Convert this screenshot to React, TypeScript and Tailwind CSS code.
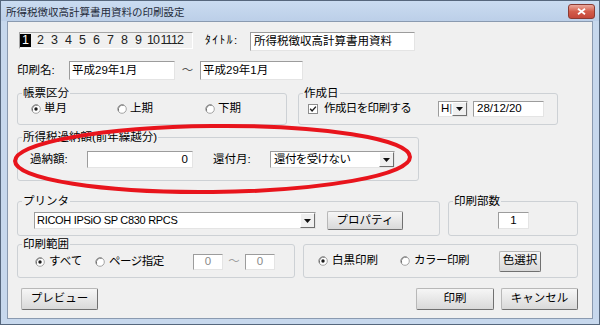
import { ReactNode } from 'react'

const FONT = "font-['Liberation_Sans','Noto_Sans_CJK_JP',sans-serif]"
const SUNKEN = 'border border-t-[#9c9c9c] border-l-[#9c9c9c] border-r-[#e4e4e4] border-b-[#e4e4e4]'

function Radio({ on }: { on?: boolean }) {
  return (
    <svg width="10" height="10" viewBox="0 0 10 10" className="shrink-0">
      <circle cx="5" cy="5" r="4.3" fill="#fff" stroke="#a3a3a3" strokeWidth="1" />
      <path d="M1.6 6.8 A4.3 4.3 0 0 1 6.8 1.2" fill="none" stroke="#6e6e6e" strokeWidth="1" />
      {on && <circle cx="5" cy="5" r="1.7" fill="#1b1b1b" />}
    </svg>
  )
}

function Check() {
  return (
    <svg width="10" height="10" viewBox="0 0 10 10" className="shrink-0">
      <rect x="0.5" y="0.5" width="9" height="9" fill="#fff" stroke="#8d8d8d" />
      <path d="M2.2 4.8 L4.1 6.9 L7.9 2.6" fill="none" stroke="#1b1b1b" strokeWidth="1.4" />
    </svg>
  )
}

function Arrow() {
  return (
    <div className="w-[15px] h-full shrink-0 flex items-center justify-center bg-[#f0f0f0] border-l border-t border-l-[#ffffff] border-t-[#ffffff] border-r border-b border-r-[#6f6f6f] border-b-[#6f6f6f]">
      <svg width="7" height="4" viewBox="0 0 7 4">
        <path d="M0 0 L7 0 L3.5 4 Z" fill="#111" />
      </svg>
    </div>
  )
}

function Group({ label, className, children }: { label: string; className: string; children: ReactNode }) {
  return (
    <fieldset className={`border border-[#cdd1d5] rounded-[3px] ${className}`}>
      <legend className="ml-[4px] px-[1px] text-[11.5px] leading-[14px]">{label}</legend>
      {children}
    </fieldset>
  )
}

function Btn({ className, children }: { className: string; children: ReactNode }) {
  return (
    <div
      className={`flex items-center justify-center rounded-[2px] border border-[#b8b8b8] border-r-[#707070] border-b-[#707070] bg-linear-to-b from-[#f6f6f6] to-[#d9d9d9] text-[11.5px] ${className}`}
    >
      {children}
    </div>
  )
}

const tabs = ['2', '3', '4', '5', '6', '7', '8', '9']

export default function App() {
  return (
    <div className={`relative w-[600px] h-[325px] overflow-hidden bg-[#c7d8ed] border border-[#56677d] text-black ${FONT}`}>
      {/* title bar */}
      <div className="h-[20px] flex items-start justify-between pl-[5px] pr-[4px] bg-linear-to-b from-[#cadcf1] to-[#bccfe8]">
        <span className="mt-[5px] text-[10.5px] leading-[12px] text-[#1f2b3a]">所得税徴収高計算書用資料の印刷設定</span>
        <div className="mt-[3px] w-[27px] h-[15px] rounded-[3px] border border-[#8b3b33] bg-linear-to-b from-[#eaa99e] via-[#d35d4b] to-[#c4473a] flex items-center justify-center">
          <svg width="9" height="7" viewBox="0 0 9 7">
            <path d="M1 0.8 L8 6.2 M8 0.8 L1 6.2" stroke="#fff" strokeWidth="1.8" />
          </svg>
        </div>
      </div>

      {/* client area */}
      <div className="ml-[6px] w-[586px] h-[298px] border border-[#8a9ab0] bg-[#f0f0f0] pl-[9px] pr-[14px] flex flex-col text-[11.5px]">
        {/* row 1 */}
        <div className="mt-[10px] h-[18px] flex items-start">
          <div className="ml-[2px] w-[174px] h-[17px] flex items-center border border-t-[#a6a6a6] border-l-[#a6a6a6] border-r-white border-b-white text-[12.5px] leading-none text-[#222]">
            <span className="w-[11px] h-[13px] bg-black text-white flex items-center justify-center">1</span>
            <span className="w-[2.5px]" />
            {tabs.map((t) => (
              <span key={t} className="w-[14px] text-center">
                {t}
              </span>
            ))}
            <span className="w-[15px] text-center tracking-[-1px]">10</span>
            <span className="w-[10px] text-center tracking-[-1px]">11</span>
            <span className="w-[13px] text-center tracking-[-1px]">12</span>
          </div>
          <span className="ml-[12px] w-[45px] h-[18px] flex items-center tracking-[1.5px]">ﾀｲﾄﾙ:</span>
          <div className={`w-[165px] h-[19px] bg-white flex items-center px-[3px] ${SUNKEN}`}>所得税徴収高計算書用資料</div>
        </div>

        {/* row 2 */}
        <div className="mt-[11px] h-[19px] flex items-center">
          <span className="w-[52px]">印刷名:</span>
          <div className={`w-[106px] h-[19px] bg-white flex items-center px-[2px] ${SUNKEN}`}>平成29年1月</div>
          <span className="w-[25px] text-center text-[#555]">～</span>
          <div className={`w-[103px] h-[19px] bg-white flex items-center px-[2px] ${SUNKEN}`}>平成29年1月</div>
        </div>

        {/* row 3 */}
        <div className="mt-[6px] flex gap-[11px]">
          <Group label="帳票区分" className="w-[270px] h-[39px]">
            <div className="h-[17px] flex items-center pl-[13px]">
              <div className="w-[86px] flex items-center gap-[3px]">
                <Radio on />
                <span>単月</span>
              </div>
              <div className="w-[88px] flex items-center gap-[3px]">
                <Radio />
                <span>上期</span>
              </div>
              <div className="flex items-center gap-[3px]">
                <Radio />
                <span>下期</span>
              </div>
            </div>
          </Group>
          <Group label="作成日" className="w-[260px] h-[39px]">
            <div className="h-[17px] flex items-center pl-[9px]">
              <div className="w-[104px] flex items-center gap-[6px]">
                <Check />
                <span className="whitespace-nowrap tracking-[-0.6px]">作成日を印刷する</span>
              </div>
              <div className={`ml-[26px] w-[30px] h-[16px] bg-white flex items-center ${SUNKEN}`}>
                <span className="flex-1 pl-[2px] leading-none">H<span className="text-[#777]">|</span></span>
                <Arrow />
              </div>
              <div className={`ml-[5px] w-[71px] h-[16px] bg-white flex items-center px-[3px] ${SUNKEN}`}>28/12/20</div>
            </div>
          </Group>
        </div>

        {/* row 4 */}
        <div className="mt-[5px] flex">
          <Group label="所得税過納額(前年繰越分)" className="w-[402px] h-[51px]">
            <div className="h-[31px] flex items-center pl-[12px]">
              <span className="w-[57px]">過納額:</span>
              <div className={`w-[106px] h-[17px] bg-white flex items-center justify-end pr-[4px] ${SUNKEN}`}>0</div>
              <span className="ml-[20px] w-[57px]">還付月:</span>
              <div className={`w-[125px] h-[17px] bg-white flex items-center ${SUNKEN}`}>
                <span className="flex-1 pl-[3px] tracking-[-0.6px]">還付を受けない</span>
                <Arrow />
              </div>
            </div>
          </Group>
        </div>

        {/* row 5 */}
        <div className="mt-[13px] flex gap-[8px]">
          <Group label="プリンタ" className="w-[423px] h-[42px]">
            <div className="h-[25px] flex items-center pl-[16px]">
              <div className={`w-[282px] h-[17px] bg-white flex items-center ${SUNKEN}`}>
                <span className="flex-1 pl-[2px] text-[11px] tracking-[-0.3px]">RICOH IPSiO SP C830 RPCS</span>
                <Arrow />
              </div>
              <Btn className="ml-[11px] w-[76px] h-[19px]">プロパティ</Btn>
            </div>
          </Group>
          <Group label="印刷部数" className="w-[130px] h-[42px]">
            <div className="h-[25px] flex items-center pl-[49px]">
              <div className={`w-[31px] h-[17px] bg-white flex items-center justify-center ${SUNKEN}`}>1</div>
            </div>
          </Group>
        </div>

        {/* row 6 */}
        <div className="mt-[1px] flex items-start">
          <Group label="印刷範囲" className="w-[278px] h-[41px]">
            <div className="h-[22px] flex items-center pl-[17px]">
              <div className="w-[60px] flex items-center gap-[4px]">
                <Radio on />
                <span>すべて</span>
              </div>
              <div className="w-[98px] flex items-center gap-[4px]">
                <Radio />
                <span className="tracking-[-0.5px]">ページ指定</span>
              </div>
              <div className={`w-[30px] h-[16px] bg-white flex items-center justify-center text-[#8a8a8a] ${SUNKEN}`}>0</div>
              <span className="w-[22px] text-center text-[#a0a0a0]">～</span>
              <div className={`w-[30px] h-[16px] bg-white flex items-center justify-center text-[#8a8a8a] ${SUNKEN}`}>0</div>
            </div>
          </Group>
          <div className="ml-[8px] mt-[7px] w-[275px] h-[34px] border border-[#cdd1d5] rounded-[3px] flex items-center pl-[14px]">
            <div className="w-[82px] flex items-center gap-[4px]">
              <Radio on />
              <span>白黒印刷</span>
            </div>
            <div className="w-[99px] flex items-center gap-[4px]">
              <Radio />
              <span className="tracking-[-0.5px]">カラー印刷</span>
            </div>
            <Btn className="w-[42px] h-[21px]">色選択</Btn>
          </div>
        </div>

        {/* row 7 */}
        <div className="mt-[10px] flex">
          <Btn className="ml-[4px] w-[77px] h-[22px]">プレビュー</Btn>
          <Btn className="ml-auto w-[78px] h-[22px]">印刷</Btn>
          <Btn className="ml-[7px] w-[77px] h-[22px]">キャンセル</Btn>
        </div>
      </div>

      {/* red annotation ellipse */}
      <svg className="absolute left-0 top-0 pointer-events-none" width="600" height="325" viewBox="0 0 600 325">
        <ellipse cx="211.5" cy="158" rx="197.5" ry="33" fill="none" stroke="#e8141c" strokeWidth="4" transform="rotate(-0.6 211.5 158)" />
      </svg>
    </div>
  )
}
